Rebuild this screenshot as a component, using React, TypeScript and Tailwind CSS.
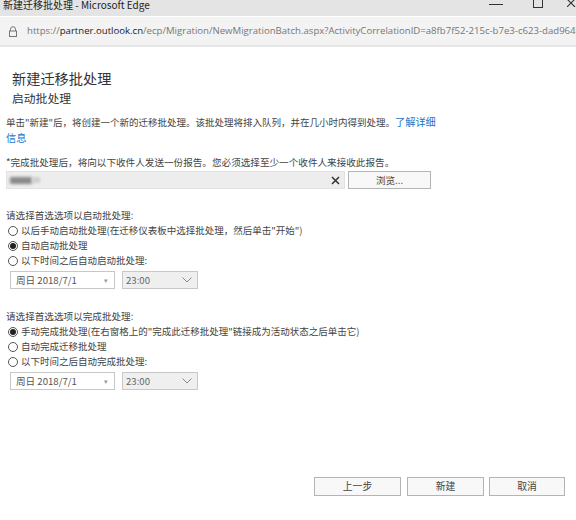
import React from "react";

const cjk = { fontFamily: '"Noto Sans CJK SC", "Noto Sans", sans-serif' };

function Radio({ checked, label }: { checked?: boolean; label: string }) {
  return (
    <div className="flex items-center h-[15px] pl-[8px]">
      <span className="w-[10px] h-[10px] rounded-full border border-[#555] flex items-center justify-center bg-white shrink-0">
        {checked && <span className="w-[6px] h-[6px] rounded-full bg-[#222]" />}
      </span>
      <span className="ml-[3px] text-[9.5px] leading-[15px] text-[#444] whitespace-nowrap">{label}</span>
    </div>
  );
}

function DateTimeRow() {
  return (
    <div className="flex items-center h-[18px] pl-[10px] mt-[3px]">
      <div className="w-[105px] h-[18px] border border-[#c8c8c8] bg-white flex items-center justify-between pl-[5px] pr-[6px]">
        <span className="text-[9.6px] text-[#555]">周日 2018/7/1</span>
        <span className="text-[7px] text-[#999]">▾</span>
      </div>
      <div className="ml-[7px] w-[76px] h-[18px] border border-[#c8c8c8] bg-[#efefef] flex items-center justify-between pl-[3px] pr-[5px]">
        <span className="text-[9.6px] text-[#666]">23:00</span>
        <svg width="10" height="6" viewBox="0 0 10 6">
          <path d="M0.5 0.5 L5 5 L9.5 0.5" fill="none" stroke="#888" strokeWidth="1" />
        </svg>
      </div>
    </div>
  );
}

export default function App() {
  return (
    <div className="w-[576px] h-[520px] bg-white overflow-hidden flex flex-col" style={cjk}>
      {/* title bar */}
      <div className="h-[16px] bg-[#e4e4e4] flex items-start justify-between relative shrink-0">
        <span className="pl-[3px] mt-[-2px] text-[10px] leading-[14px] text-[#222]">新建迁移批处理 - Microsoft Edge</span>
        <div className="flex items-start">
          <div className="w-[14px] h-[1px] bg-[#333] mt-[4px] mr-[30px]" />
          <div className="w-[10px] h-[8px] border border-[#333] border-t-0 mr-[24px]" />
          <svg width="9" height="7" viewBox="0 0 9 7">
            <path d="M0 -1 L8 7 M8 -1 L0 7" stroke="#333" strokeWidth="1.1" />
          </svg>
        </div>
      </div>
      {/* address bar */}
      <div className="h-[30px] bg-[#f3f3f3] border-b-[2px] border-[#e6e6e6] flex items-center shrink-0 mt-[1px] overflow-hidden">
        <svg width="10" height="11" viewBox="0 0 10 11" className="ml-[8px] shrink-0">
          <path d="M2.5 5 V3.2 A2.5 2.5 0 0 1 7.5 3.2 V5" fill="none" stroke="#777" strokeWidth="1" />
          <rect x="1.5" y="5" width="7" height="5.5" fill="none" stroke="#777" strokeWidth="1" />
        </svg>
        <span
          className="ml-[9px] text-[9.6px] text-[#777] whitespace-nowrap"
          style={{ fontFamily: '"Open Sans", "Noto Sans", sans-serif' }}
        >
          https://<span className="text-[#222]">partner.outlook.cn</span>/ecp/Migration/NewMigrationBatch.aspx?ActivityCorrelationID=a8fb7f52-215c-b7e3-c623-dad964b6
        </span>
      </div>

      {/* content */}
      <div className="flex flex-col">
        <div className="pl-[12px] mt-[22px] text-[14.2px] leading-[18px] text-[#333]">新建迁移批处理</div>
        <div className="pl-[12px] mt-[3px] text-[11.8px] leading-[16px] text-[#333]">启动批处理</div>
        <div className="pl-[6px] mt-[8px] text-[9.5px] leading-[15px] text-[#444] whitespace-nowrap">
          单击"新建"后，将创建一个新的迁移批处理。该批处理将排入队列，并在几小时内得到处理。
          <span className="text-[#1a73c8] text-[10.2px]">了解详细</span>
          <br />
          <span className="text-[#1a73c8] text-[10.2px]">信息</span>
        </div>
        <div className="pl-[6px] mt-[9px] text-[9.6px] leading-[15px] text-[#444] whitespace-nowrap">
          *完成批处理后，将向以下收件人发送一份报告。您必须选择至少一个收件人来接收此报告。
        </div>
        <div className="flex items-center pl-[6px] mt-[1px]">
          <div className="w-[339px] h-[18px] bg-[#ededed] border border-[#e2e2e2] flex items-center justify-between pr-[4px]">
            <div className="ml-[3px] flex items-center">
              <div className="w-[22px] h-[7px] bg-[#8a8a8a] blur-[1.5px] rounded-[1px]" />
              <div className="w-[8px] h-[6px] bg-[#d0d0d0] blur-[1px]" />
            </div>
            <svg width="9" height="9" viewBox="0 0 9 9">
              <path d="M1 1 L8 8 M8 1 L1 8" stroke="#333" strokeWidth="1.5" />
            </svg>
          </div>
          <div className="ml-[3px] w-[83px] h-[18px] bg-[#f8f8f8] border border-[#b4b4b4] flex items-center justify-center text-[9.6px] text-[#444]">
            浏览...
          </div>
        </div>

        <div className="pl-[6px] mt-[19px] text-[9.6px] leading-[15px] text-[#444]">请选择首选选项以启动批处理:</div>
        <Radio label={'以后手动启动批处理(在迁移仪表板中选择批处理，然后单击"开始")'} />
        <Radio checked label="自动启动批处理" />
        <Radio label="以下时间之后自动启动批处理:" />
        <DateTimeRow />

        <div className="pl-[6px] mt-[20px] text-[9.6px] leading-[15px] text-[#444]">请选择首选选项以完成批处理:</div>
        <Radio checked label={'手动完成批处理(在右窗格上的"完成此迁移批处理"链接成为活动状态之后单击它)'} />
        <Radio label="自动完成迁移批处理" />
        <Radio label="以下时间之后自动完成批处理:" />
        <DateTimeRow />
      </div>

      <div className="flex mt-[87px] pl-[314px]">
        <div className="w-[87px] h-[19px] bg-[#f8f8f8] border border-[#b4b4b4] flex items-center justify-center text-[9.8px] text-[#444]">上一步</div>
        <div className="ml-[6px] w-[77px] h-[19px] bg-[#f8f8f8] border border-[#b4b4b4] flex items-center justify-center text-[9.8px] text-[#444]">新建</div>
        <div className="ml-[5px] w-[76px] h-[19px] bg-[#f8f8f8] border border-[#b4b4b4] flex items-center justify-center text-[9.8px] text-[#444]">取消</div>
      </div>
    </div>
  );
}
